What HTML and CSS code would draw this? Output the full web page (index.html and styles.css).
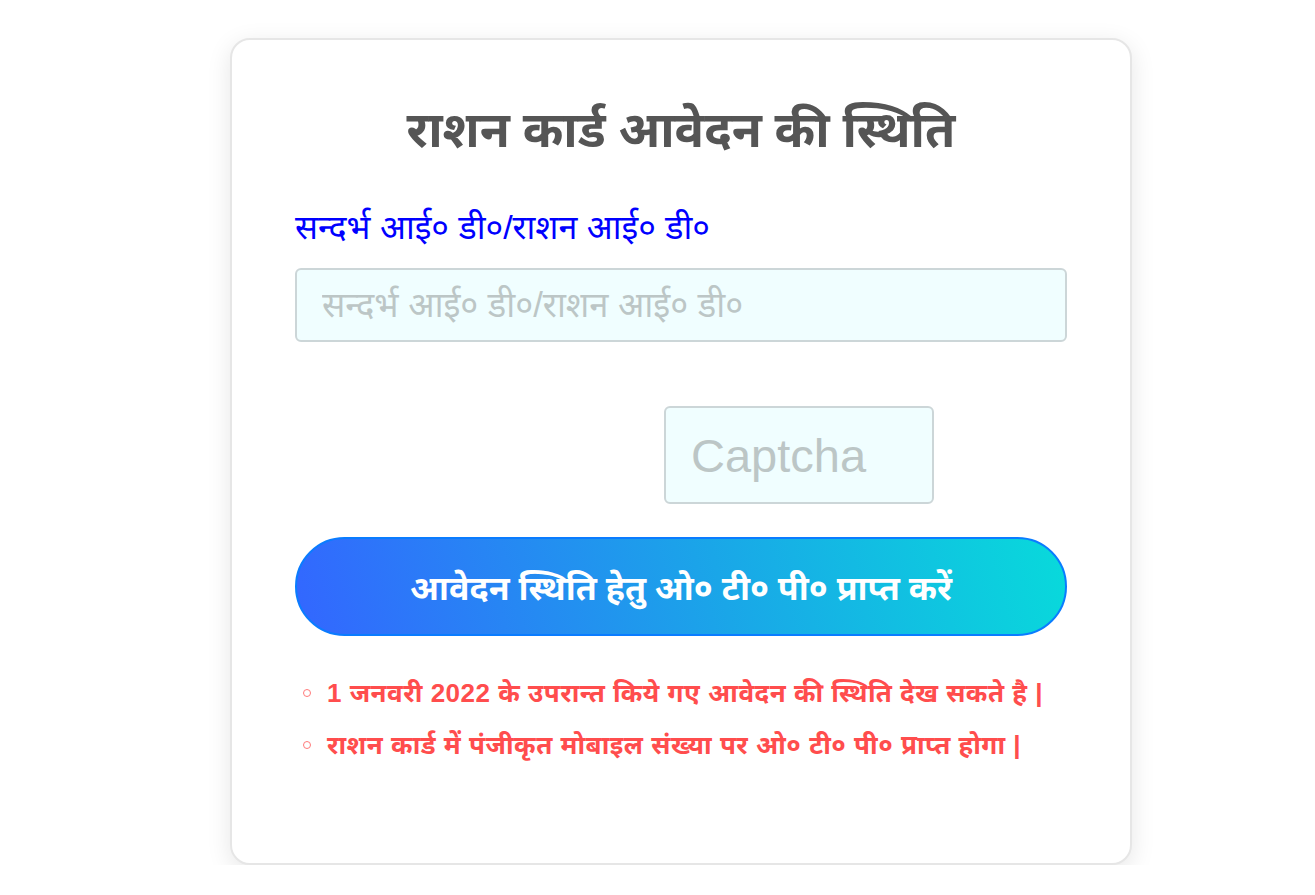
FILE: index.html
```html
<!DOCTYPE html>
<html lang="hi">
<head>
<meta charset="utf-8">
<title>राशन कार्ड आवेदन की स्थिति</title>
<link rel="stylesheet" href="styles.css">
</head>
<body>
<div class="page">
  <div class="card">
    <h1 class="title">राशन कार्ड आवेदन की स्थिति</h1>
    <label class="label" for="refid">सन्दर्भ आई० डी०/राशन आई० डी०</label>
    <input class="field" id="refid" type="text" placeholder="सन्दर्भ आई० डी०/राशन आई० डी०">
    <div class="captcha-row">
      <div class="captcha-img"></div>
      <input class="captcha" type="text" placeholder="Captcha">
    </div>
    <button class="btn" type="button">आवेदन स्थिति हेतु ओ० टी० पी० प्राप्त करें</button>
    <ul class="notes">
      <li>1 जनवरी 2022 के उपरान्त किये गए आवेदन की स्थिति देख सकते है |</li>
      <li>राशन कार्ड में पंजीकृत मोबाइल संख्या पर ओ० टी० पी० प्राप्त होगा |</li>
    </ul>
  </div>
</div>
</body>
</html>
```

FILE: styles.css
```css
html, body {
  margin: 0;
  padding: 0;
  background: #ffffff;
}
body {
  font-family: "Liberation Sans", "Noto Sans", sans-serif;
}
.page {
  display: flex;
  justify-content: center;
  padding-top: 38px;
  padding-left: 47px;
}
.card {
  box-sizing: border-box;
  width: 902px;
  height: 827px;
  background: #fff;
  border: 2px solid #e6e6e6;
  border-radius: 20px;
  box-shadow: 0 6px 24px rgba(0,0,0,0.10);
  padding: 0 63px;
  display: flex;
  flex-direction: column;
}
.title {
  margin: 53px 0 0;
  text-align: center;
  font-family: "Noto Sans", "Liberation Sans", sans-serif;
  font-weight: 700;
  font-size: 49px;
  line-height: 70px;
  color: #555555;
}
.label {
  margin-top: 41px;
  font-size: 34px;
  line-height: 46px;
  color: #0000ff;
}
.field {
  box-sizing: border-box;
  margin-top: 18px;
  width: 100%;
  height: 74px;
  background: #f0feff;
  border: 2px solid #ccd6d8;
  border-radius: 6px;
  padding: 0 25px;
  font-family: "Liberation Sans", "Noto Sans", sans-serif;
  font-size: 34.5px;
  color: #333;
  outline: none;
}
.field::placeholder, .captcha::placeholder {
  color: #bcc6c6;
}
.captcha-row {
  margin-top: 64px;
  display: flex;
  justify-content: center;
}
.captcha-img {
  width: 236px;
}
.captcha {
  box-sizing: border-box;
  width: 270px;
  height: 98px;
  background: #f0feff;
  border: 2px solid #ccd6d8;
  border-radius: 6px;
  padding: 0 25px;
  font-family: "Liberation Sans", sans-serif;
  font-size: 47px;
  color: #333;
  outline: none;
}
.btn {
  margin-top: 33px;
  width: 100%;
  height: 99px;
  border: 2px solid #0a7cff;
  border-radius: 50px;
  background: linear-gradient(75deg, #3366ff 0%, #1aa6e8 55%, #08dadb 100%);
  color: #fff;
  font-family: "Noto Sans", "Liberation Sans", sans-serif;
  font-weight: 700;
  font-size: 34px;
  cursor: pointer;
}
.notes {
  margin: 31px 0 0;
  padding: 0 0 0 8px;
  list-style: none;
  color: #ff4d4d;
  font-family: "Liberation Sans", "Noto Sans", sans-serif;
  font-weight: 700;
  font-size: 26px;
  letter-spacing: 0.5px;
  line-height: 52px;
}
.notes li::before {
  content: "";
  display: inline-block;
  box-sizing: border-box;
  width: 8px;
  height: 8px;
  border: 1.5px solid #ff7a7a;
  border-radius: 50%;
  margin-right: 16px;
  vertical-align: middle;
  position: relative;
  top: -2px;
}
```
